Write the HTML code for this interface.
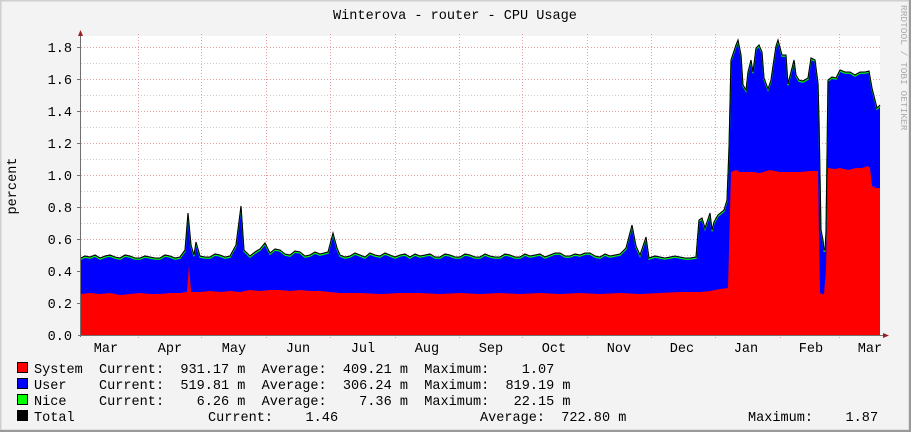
<!DOCTYPE html>
<html><head><meta charset="utf-8"><style>
html,body{margin:0;padding:0;background:#f3f3f3;}
svg{display:block;}
text{font-family:"Liberation Mono","DejaVu Sans Mono",monospace;font-size:13.55px;fill:#000;}
</style></head><body>
<svg width="911" height="432" viewBox="0 0 911 432" xmlns="http://www.w3.org/2000/svg">
<defs>
<polyline id="tl" points="81,258 85,256 90,257 95,255 100,258 105,256 110,255 115,257 120,258 125,255 130,256 135,258 140,258 145,256 150,257 155,258 160,258 165,255 170,256 175,258 180,257 185,250 188,213 191,245 194,255 196,242 200,256 205,257 210,257 215,254 220,255 225,257 230,256 236,245 241,206 244,250 250,256 255,252 260,249 265,243 270,253 275,249 280,250 285,254 290,255 295,251 300,252 305,256 310,255 315,252 320,254 328,252 333,233 337,248 340,255 345,257 350,256 355,253 360,255 365,257 370,253 375,255 380,256 385,253 390,255 395,257 400,255 405,254 410,257 415,254 420,256 425,255 430,254 435,257 440,257 445,254 450,255 455,257 460,257 465,254 470,255 475,257 480,257 485,254 490,256 495,257 500,257 505,254 510,255 515,257 520,257 525,254 530,256 535,255 540,254 545,257 550,255 555,253 560,253 565,256 570,256 575,254 580,255 585,253 590,253 595,256 600,257 605,254 610,256 615,255 620,254 626,248 632,225 636,246 640,255 646,237 649,258 655,256 660,257 665,258 670,257 675,256 680,257 685,258 690,258 696,257 699,220 702,218 705,228 708,219 710,213 712,230 714,222 718,215 724,210 727,200 729,148 731,60 736,45 738,40 741,55 743,85 746,90 748,72 751,60 753,72 756,48 759,45 762,52 764,78 768,89 771,80 773,66 776,46 778,40 782,55 786,55 788,84 791,72 794,60 796,75 799,80 803,81 808,78 811,58 815,60 818,83 819,120 821,230 823,240 824,250 825,250 826,232 828,80 832,77 836,78 840,70 845,72 850,72 855,75 860,72 865,72 869,71 872,88 875,100 877,108 880,105"/>
</defs>
<rect x="0" y="0" width="911" height="432" fill="#f3f3f3"/>
<rect x="0.5" y="0.5" width="909" height="430" fill="none" stroke="#cfcfcf" stroke-width="2"/>
<line x1="0" y1="431" x2="911" y2="431" stroke="#9a9a9a" stroke-width="2"/>
<line x1="910" y1="0" x2="910" y2="432" stroke="#9a9a9a" stroke-width="2"/>
<rect x="81" y="36" width="799" height="299" fill="#fff"/>
<g stroke-width="1" stroke-dasharray="1,2">
<g stroke="#cccccc">
<line x1="81" y1="319.5" x2="880" y2="319.5"/><line x1="81" y1="287.5" x2="880" y2="287.5"/><line x1="81" y1="255.5" x2="880" y2="255.5"/><line x1="81" y1="223.5" x2="880" y2="223.5"/><line x1="81" y1="191.5" x2="880" y2="191.5"/><line x1="81" y1="159.5" x2="880" y2="159.5"/><line x1="81" y1="127.5" x2="880" y2="127.5"/><line x1="81" y1="95.5" x2="880" y2="95.5"/><line x1="81" y1="63.5" x2="880" y2="63.5"/>
</g>
<g stroke="#e8a0a0">
<line x1="81" y1="303.5" x2="880" y2="303.5"/><line x1="81" y1="271.5" x2="880" y2="271.5"/><line x1="81" y1="239.5" x2="880" y2="239.5"/><line x1="81" y1="207.5" x2="880" y2="207.5"/><line x1="81" y1="175.5" x2="880" y2="175.5"/><line x1="81" y1="143.5" x2="880" y2="143.5"/><line x1="81" y1="111.5" x2="880" y2="111.5"/><line x1="81" y1="79.5" x2="880" y2="79.5"/><line x1="81" y1="47.5" x2="880" y2="47.5"/>
<line x1="138.5" y1="34" x2="138.5" y2="338"/><line x1="201.5" y1="34" x2="201.5" y2="338"/><line x1="266.5" y1="34" x2="266.5" y2="338"/><line x1="330.5" y1="34" x2="330.5" y2="338"/><line x1="395.5" y1="34" x2="395.5" y2="338"/><line x1="459.5" y1="34" x2="459.5" y2="338"/><line x1="522.5" y1="34" x2="522.5" y2="338"/><line x1="587.5" y1="34" x2="587.5" y2="338"/><line x1="651.5" y1="34" x2="651.5" y2="338"/><line x1="715.5" y1="34" x2="715.5" y2="338"/><line x1="780.5" y1="34" x2="780.5" y2="338"/><line x1="839.5" y1="34" x2="839.5" y2="338"/>
</g></g>
<polygon fill="#0000ff" points="81,335 81,258 85,256 90,257 95,255 100,258 105,256 110,255 115,257 120,258 125,255 130,256 135,258 140,258 145,256 150,257 155,258 160,258 165,255 170,256 175,258 180,257 185,250 188,213 191,245 194,255 196,242 200,256 205,257 210,257 215,254 220,255 225,257 230,256 236,245 241,206 244,250 250,256 255,252 260,249 265,243 270,253 275,249 280,250 285,254 290,255 295,251 300,252 305,256 310,255 315,252 320,254 328,252 333,233 337,248 340,255 345,257 350,256 355,253 360,255 365,257 370,253 375,255 380,256 385,253 390,255 395,257 400,255 405,254 410,257 415,254 420,256 425,255 430,254 435,257 440,257 445,254 450,255 455,257 460,257 465,254 470,255 475,257 480,257 485,254 490,256 495,257 500,257 505,254 510,255 515,257 520,257 525,254 530,256 535,255 540,254 545,257 550,255 555,253 560,253 565,256 570,256 575,254 580,255 585,253 590,253 595,256 600,257 605,254 610,256 615,255 620,254 626,248 632,225 636,246 640,255 646,237 649,258 655,256 660,257 665,258 670,257 675,256 680,257 685,258 690,258 696,257 699,220 702,218 705,228 708,219 710,213 712,230 714,222 718,215 724,210 727,200 729,148 731,60 736,45 738,40 741,55 743,85 746,90 748,72 751,60 753,72 756,48 759,45 762,52 764,78 768,89 771,80 773,66 776,46 778,40 782,55 786,55 788,84 791,72 794,60 796,75 799,80 803,81 808,78 811,58 815,60 818,83 819,120 821,230 823,240 824,250 825,250 826,232 828,80 832,77 836,78 840,70 845,72 850,72 855,75 860,72 865,72 869,71 872,88 875,100 877,108 880,105 880,335"/>
<polygon fill="#ff0000" points="81,335 81,294 90,293 100,294 110,293 120,295 130,294 140,293 150,294 160,294 170,293 180,293 187,292 189,265 191,292 200,292 210,291 220,292 230,291 240,292 250,290 260,291 270,290 280,290 290,291 300,290 310,291 320,291 330,292 340,293 360,293 380,294 400,293 420,293 440,294 460,293 480,294 500,293 520,294 540,293 560,294 580,293 600,294 620,293 640,294 660,293 680,292 700,292 710,291 720,289 728,288 729,250 731,172 736,170 740,172 746,172 752,172 760,173 770,170 780,172 790,172 800,172 810,171 818,171 819,240 820,293 822,294 824,294 826,270 828,168 835,169 840,168 848,170 856,168 862,168 868,166 870,168 872,186 876,188 880,188 880,335"/>
<use href="#tl" fill="none" stroke="#00ff00" stroke-width="1.2" transform="translate(0,1.2)"/>
<use href="#tl" fill="none" stroke="#000" stroke-width="1.1"/>
<line x1="80.5" y1="32" x2="80.5" y2="337" stroke="#707070"/>
<line x1="78" y1="335.5" x2="884" y2="335.5" stroke="#707070"/>
<polygon points="78,36 83,36 80.5,30" fill="#9a2020"/>
<polygon points="883,333 883,338 889,335.5" fill="#9a2020"/>
<g stroke="#707070">
<line x1="77" y1="47.5" x2="81" y2="47.5"/><line x1="77" y1="79.5" x2="81" y2="79.5"/><line x1="77" y1="111.5" x2="81" y2="111.5"/><line x1="77" y1="143.5" x2="81" y2="143.5"/><line x1="77" y1="175.5" x2="81" y2="175.5"/><line x1="77" y1="207.5" x2="81" y2="207.5"/><line x1="77" y1="239.5" x2="81" y2="239.5"/><line x1="77" y1="271.5" x2="81" y2="271.5"/><line x1="77" y1="303.5" x2="81" y2="303.5"/>
</g>
<text x="455" y="19" text-anchor="middle">Winterova - router - CPU Usage</text>
<text x="16" y="186" text-anchor="middle" transform="rotate(-90 16 186)">percent</text>
<text x="901" y="5" style="font-size:9.5px;fill:#aaa" transform="rotate(90 901 5)">RRDTOOL / TOBI OETIKER</text>
<g text-anchor="end">
<text x="72" y="52">1.8</text><text x="72" y="84">1.6</text><text x="72" y="116">1.4</text><text x="72" y="148">1.2</text><text x="72" y="180">1.0</text><text x="72" y="212">0.8</text><text x="72" y="244">0.6</text><text x="72" y="276">0.4</text><text x="72" y="308">0.2</text><text x="72" y="340">0.0</text>
</g>
<g text-anchor="middle">
<text x="106" y="352">Mar</text><text x="170" y="352">Apr</text><text x="234" y="352">May</text><text x="298" y="352">Jun</text><text x="363" y="352">Jul</text><text x="427" y="352">Aug</text><text x="491" y="352">Sep</text><text x="554" y="352">Oct</text><text x="619" y="352">Nov</text><text x="682" y="352">Dec</text><text x="746" y="352">Jan</text><text x="811" y="352">Feb</text><text x="870" y="352">Mar</text>
</g>
<rect x="17.5" y="362.5" width="10" height="10" fill="#ff0000" stroke="#000"/>
<rect x="17.5" y="378.5" width="10" height="10" fill="#0000ff" stroke="#000"/>
<rect x="17.5" y="394.5" width="10" height="10" fill="#00ff00" stroke="#000"/>
<rect x="17.5" y="410.5" width="10" height="10" fill="#000" stroke="#000"/>
<text x="34" y="373" xml:space="preserve">System  Current:  931.17 m  Average:  409.21 m  Maximum:    1.07</text>
<text x="34" y="389" xml:space="preserve">User    Current:  519.81 m  Average:  306.24 m  Maximum:  819.19 m</text>
<text x="34" y="405" xml:space="preserve">Nice    Current:    6.26 m  Average:    7.36 m  Maximum:   22.15 m</text>
<text x="34" y="421">Total</text>
<text x="208" y="421" xml:space="preserve">Current:    1.46</text>
<text x="480" y="421" xml:space="preserve">Average:  722.80 m</text>
<text x="748" y="421" xml:space="preserve">Maximum:    1.87</text>
</svg>
</body></html>
